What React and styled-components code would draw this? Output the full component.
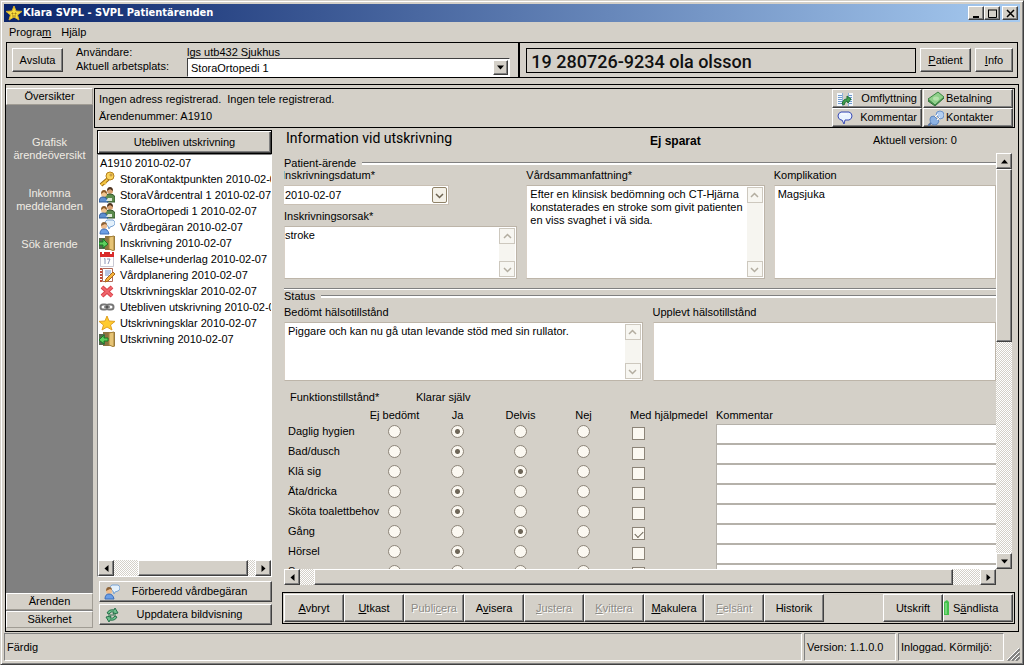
import { createGlobalStyle, styled } from 'styled-components';

const messageIcon = (
  <>
    <path d="M8 1h6q2 1 2 3t-2 3l-3 1-1 2-1-3Q6 6 6 4t2-3z" fill="#e4f1fb" stroke="#7aa4d4" />
    <circle cx="5" cy="7" r="3" fill="#efbd8d" />
    <path d="M2 7q0-4 3-4 3 0 3 3L6 5z" fill="#8d6236" />
    <path d="M1 15q0-5 4-5t5 5z" fill="#6c9fe6" stroke="#3d6db8" />
  </>
);

const peopleIcon = (
  <>
    <circle cx="11" cy="4" r="3" fill="#d9a173" />
    <path d="M8 4q0-4 3-4t3 4l-3-2z" fill="#4e3420" />
    <path d="M6 12V9q1-2 5-2t5 3v5H8z" fill="#5b8b4d" stroke="#34562c" />
    <circle cx="5" cy="7" r="3" fill="#f0c48e" />
    <path d="M2 7q0-4 3-4t3 4L5 5z" fill="#8a5a26" />
    <path d="M0 15q0-5 4-5t5 5z" fill="#5d8fd0" stroke="#315a96" />
    <path d="M9 11h4v3H7z" fill="#dfe8d8" />
  </>
);

const icons = {
  appStar: (
    <>
      <path d="M8 1l2 5 6 .4-4.500 3.600L13 15l-5-3-5 3 1.500-5L0 6.400 6 6z" fill="#f7dc3c" stroke="#d9b02c" />
      <path d="M6 8h1v1H6zM9 8h1v1H9zM6 11h4" fill="#6a5010" stroke="#a8821c" />
    </>
  ),
  key: (
    <>
      <path d="M9 8l-7 6" stroke="#9a6a10" strokeWidth="4" />
      <path d="M9 8l-7 6M5 11l2 2" stroke="#f4c542" strokeWidth="2" />
      <circle cx="11" cy="5" r="4" fill="#f9d35c" stroke="#b57f1a" />
      <circle cx="12" cy="4" r="1" fill="#fff" stroke="#b57f1a" />
    </>
  ),
  people: peopleIcon,
  message: messageIcon,
  enter: (
    <>
      <path d="M6 1h10v14H6z" fill="#8d7440" />
      <path d="M10 2l5-1v15l-5-2z" fill="#e6c476" stroke="#a5813a" />
      <path d="M0 3h6v11H0z" fill="#55694d" />
      <path d="M0 7h4V4l5 5-5 4v-3H0z" fill="#5ed05e" stroke="#187a24" />
    </>
  ),
  leave: (
    <>
      <path d="M4 1h12v14H4z" fill="#8d7440" />
      <path d="M10 2l5-1v15l-5-2z" fill="#e6c476" stroke="#a5813a" />
      <path d="M0 3h6v11H0z" fill="#55694d" />
      <path d="M9 7H5V4L0 9l5 4v-3h4z" fill="#5ed05e" stroke="#187a24" />
    </>
  ),
  calendar: (
    <>
      <path d="M1.500 2.500h13v13h-13z" fill="#fff" stroke="#c9c9d4" />
      <path d="M1 1h14v5H1z" fill="#d92b2b" />
      <path d="M4 0v3M12 0v3" stroke="#fff" strokeWidth="2" />
      <path d="M5 8l1-.5V13M8 8h3l-2 5" fill="none" stroke="#8d96b8" />
    </>
  ),
  notepad: (
    <>
      <path d="M3.500 1.500h10v13h-10z" fill="#fff" stroke="#b06a5a" />
      <path d="M2 1v14" stroke="#c24b3a" strokeWidth="2" strokeDasharray="2 1" />
      <path d="M6 4h6M6 6h6M6 8h4" stroke="#6f93cc" />
      <path d="M14 5l2 2-7 7-3 1 1-3z" fill="#f6b53d" stroke="#a8681c" />
    </>
  ),
  cross: (
    <>
      <path d="M3 4l10 9M13 4L3 13" stroke="#d8444c" strokeWidth="4" />
      <path d="M3 4l10 9M13 4L3 13" stroke="#f0666c" strokeWidth="2" />
    </>
  ),
  chain: (
    <g fill="none" stroke="#777">
      <rect x="1.500" y="5.500" width="7" height="5" rx="2.500" strokeWidth="2" />
      <rect x="7.500" y="5.500" width="7" height="5" rx="2.500" strokeWidth="2" />
      <path d="M5 8h6" stroke="#333" />
    </g>
  ),
  star: <path d="M8 1l2 5 6 .4-4.500 3.600L13 15l-5-3-5 3 1.500-5L0 6.400 6 6z" fill="#ffcb2e" stroke="#e0a020" />,
  move: (
    <>
      <path d="M0 2h6v13H0zM11 2h5v13h-5z" fill="#f4f8fd" />
      <path
        d="M1 4.500h4M1 6.500h4M1 8.500h4M1 10.500h4M1 12.500h4M12 4.500h3M12 6.500h3M12 8.500h3M12 10.500h3M12 12.500h3"
        stroke="#6f9bd0"
      />
      <path d="M5.500 2v13M11.500 2v13" stroke="#8fb2da" />
      <path d="M5 13q1-5 5-5V5l4 3-3 4-1-2q-2 0-3 4z" fill="#3da04c" stroke="#1f6d33" />
    </>
  ),
  bubble: (
    <>
      <path d="M4 2h8q3 1 3 4t-3 4H8l-1 4-2-4H4Q1 9 1 6t3-4z" fill="#eaf3ff" stroke="#3648b4" />
      <path d="M4 4h6" stroke="#fff" />
    </>
  ),
  money: (
    <>
      <path d="M0 10l10-8 6 5-9 8z" fill="#4f9a52" stroke="#2f7036" />
      <path d="M0 8l10-7 6 5-9 8z" fill="#8fd08a" stroke="#3d8444" />
      <ellipse cx="8" cy="7.500" rx="3" ry="2" fill="#b5e2ac" />
    </>
  ),
  plug: (
    <>
      <path d="M0 16l5-5" stroke="#5a78a8" strokeWidth="2" />
      <path d="M2 9q0-3 4-3l5 5q-1 4-4 4-5 0-5-6z" fill="#8db2e2" stroke="#5f88c0" />
      <path d="M8 5q0-4 4-4 4 0 4 4 0 4-4 4z" fill="#b4cef0" stroke="#6f94c8" />
      <path d="M7 7l3-3M9 10l3-3" stroke="#fff" />
    </>
  ),
  refresh: (
    <>
      <path d="M3 6q2-4 7-3l1-2 3 5-5 1 1-2Q7 4 5 7z" fill="#6cc08c" stroke="#28704a" />
      <path d="M13 10q-2 4-7 3l-1 2-3-5 5-1-1 2q3 1 5-2z" fill="#6cc08c" stroke="#28704a" />
      <path d="M4 8h8" stroke="#28704a" />
    </>
  ),
};

const treeItems = [
  ['key', 'StoraKontaktpunkten 2010-02-07'],
  ['people', 'StoraVårdcentral 1 2010-02-07'],
  ['people', 'StoraOrtopedi 1 2010-02-07'],
  ['message', 'Vårdbegäran 2010-02-07'],
  ['enter', 'Inskrivning 2010-02-07'],
  ['calendar', 'Kallelse+underlag 2010-02-07'],
  ['notepad', 'Vårdplanering 2010-02-07'],
  ['cross', 'Utskrivningsklar 2010-02-07'],
  ['chain', 'Utebliven utskrivning 2010-02-07'],
  ['star', 'Utskrivningsklar 2010-02-07'],
  ['leave', 'Utskrivning 2010-02-07'],
];

const levels = ['Ej bedömt', 'Ja', 'Delvis', 'Nej'];

const abilities = [
  { name: 'Daglig hygien', level: 'Ja' },
  { name: 'Bad/dusch', level: 'Ja' },
  { name: 'Klä sig', level: 'Delvis' },
  { name: 'Äta/dricka', level: 'Ja' },
  { name: 'Sköta toalettbehov', level: 'Ja' },
  { name: 'Gång', level: 'Delvis', aid: true },
  { name: 'Hörsel', level: 'Ja' },
  { name: 'Syn' },
];

const actions = [
  { before: '', hot: 'A', after: 'vbryt' },
  { before: '', hot: 'U', after: 'tkast' },
  { before: 'Publi', hot: 'c', after: 'era', disabled: true },
  { before: 'A', hot: 'v', after: 'isera' },
  { before: '', hot: 'J', after: 'ustera', disabled: true },
  { before: '', hot: 'K', after: 'vittera', disabled: true },
  { before: '', hot: 'M', after: 'akulera' },
  { before: '', hot: 'F', after: 'elsänt', disabled: true },
  { before: 'Historik', hot: '', after: '' },
];

const Icon = ({ name }) => (
  <IconSvg viewBox="0 0 16 16" aria-hidden="true">
    {icons[name]}
  </IconSvg>
);

const Arrow = ({ dir }) => {
  const turn = { up: 0, right: 90, down: 180, left: 270 }[dir];
  return (
    <ArrowSvg viewBox="0 0 7 7" aria-hidden="true">
      <path d="M0 5.500h7L3.500 1.500z" transform={`rotate(${turn} 3.500 3.500)`} />
    </ArrowSvg>
  );
};

const Chevron = ({ up }) => (
  <ChevronSvg viewBox="0 0 9 9" aria-hidden="true">
    <path d={up ? 'M1 6l3.500-3.500L8 6' : 'M1 3l3.500 3.500L8 3'} />
  </ChevronSvg>
);

const Scrollbar = ({ vertical, start, size, label }) => (
  <ScrollTrack $vertical={vertical}>
    <ScrollButton aria-label={`${label} bakåt`}>
      <Arrow dir={vertical ? 'up' : 'left'} />
    </ScrollButton>
    <ScrollLane $vertical={vertical}>
      <ScrollThumb $vertical={vertical} $start={start} $size={size} />
    </ScrollLane>
    <ScrollButton aria-label={`${label} framåt`}>
      <Arrow dir={vertical ? 'down' : 'right'} />
    </ScrollButton>
  </ScrollTrack>
);

const NoteField = ({ id, label, value, scroll, flush }) => (
  <Field>
    <FieldLabel htmlFor={id}>{label}</FieldLabel>
    <NoteBox>
      <NoteText id={id} defaultValue={value} $flush={flush} />
      {scroll && (
        <NoteScroll>
          <SoftButton aria-label="Upp" disabled>
            <Chevron up />
          </SoftButton>
          <SoftButton aria-label="Ned" disabled>
            <Chevron />
          </SoftButton>
        </NoteScroll>
      )}
    </NoteBox>
  </Field>
);

const App = () => {
  return (
    <Window>
      <GlobalStyle />
      <TitleBar>
        <Icon name="appStar" />
        <Title>Klara SVPL - SVPL Patientärenden</Title>
        <WindowButton aria-label="Minimera">
          <svg viewBox="0 0 9 9">
            <path d="M1 8h6" strokeWidth="2" />
          </svg>
        </WindowButton>
        <WindowButton aria-label="Maximera">
          <svg viewBox="0 0 9 9">
            <path d="M.5 1v7.500h8V1M0 1h9" />
          </svg>
        </WindowButton>
        <WindowButton aria-label="Stäng" $apart>
          <svg viewBox="0 0 9 9">
            <path d="M1 1l7 7M8 1L1 8" strokeWidth="1.500" />
          </svg>
        </WindowButton>
      </TitleBar>

      <MenuBar>
        <MenuItem>
          Progra<u>m</u>
        </MenuItem>
        <MenuItem>Hjälp</MenuItem>
      </MenuBar>

      <TopBar>
        <UserPart>
          <Button>Avsluta</Button>
          <UserGrid>
            <span>Användare:</span>
            <span>lgs utb432 Sjukhus</span>
            <label htmlFor="workplace">Aktuell arbetsplats:</label>
            <SelectBox>
              <WorkplaceSelect id="workplace">
                <option>StoraOrtopedi 1</option>
              </WorkplaceSelect>
              <SelectArrow>
                <Arrow dir="down" />
              </SelectArrow>
            </SelectBox>
          </UserGrid>
        </UserPart>
        <PatientPart>
          <PatientName>19 280726-9234 ola olsson</PatientName>
          <Button>
            <u>P</u>atient
          </Button>
          <Button $narrow>
            <u>I</u>nfo
          </Button>
        </PatientPart>
      </TopBar>

      <Frame>
        <Sidebar>
          <SideTab>Översikter</SideTab>
          <SideLinks>
            <a href="#oversikt">Grafisk ärendeöversikt</a>
            <a href="#inkomna">Inkomna meddelanden</a>
            <a href="#sok">Sök ärende</a>
          </SideLinks>
          <SideTab>Ärenden</SideTab>
          <SideTab>Säkerhet</SideTab>
        </Sidebar>

        <Main>
          <PatientBand>
            <BandText>
              <BandLine>
                <span>Ingen adress registrerad.</span>
                <span>Ingen tele registrerad.</span>
              </BandLine>
              <BandLine>Ärendenummer: A1910</BandLine>
            </BandText>
            <BandButtons>
              <BandButton $spread>
                <Icon name="move" />
                Omflyttning
              </BandButton>
              <BandButton>
                <Icon name="money" />
                Betalning
              </BandButton>
              <BandButton $spread>
                <Icon name="bubble" />
                Kommentar
              </BandButton>
              <BandButton>
                <Icon name="plug" />
                Kontakter
              </BandButton>
            </BandButtons>
          </PatientBand>

          <Body>
            <TreePanel>
              <TreeHeader>Utebliven utskrivning</TreeHeader>
              <TreeBox>
                <TreeList>
                  <TreeRoot>A1910 2010-02-07</TreeRoot>
                  {treeItems.map(([icon, text], index) => (
                    <TreeItem key={index}>
                      <Icon name={icon} />
                      {text}
                    </TreeItem>
                  ))}
                </TreeList>
                <Scrollbar start={17} size={78} label="Lista" />
              </TreeBox>
              <TreeButton>
                <Icon name="message" />
                <span>Förberedd vårdbegäran</span>
              </TreeButton>
              <TreeButton>
                <Icon name="refresh" />
                <span>Uppdatera bildvisning</span>
              </TreeButton>
            </TreePanel>

            <FormPanel>
              <FormHeader>
                <Heading>Information vid utskrivning</Heading>
                <SaveState>Ej sparat</SaveState>
                <span>Aktuell version: 0</span>
              </FormHeader>

              <FormScroller>
                <FormView>
                  <Legend>Patient-ärende</Legend>
                  <PatientGroup>
                    <AdmissionColumn>
                      <Field>
                        <FieldLabel htmlFor="admitted" $clip>
                          Inskrivningsdatum*
                        </FieldLabel>
                        <DateBox>
                          <DateSelect id="admitted">
                            <option>2010-02-07</option>
                          </DateSelect>
                          <DateArrow>
                            <Chevron />
                          </DateArrow>
                        </DateBox>
                      </Field>
                      <NoteField id="reason" label="Inskrivningsorsak*" value="stroke" scroll flush />
                    </AdmissionColumn>
                    <NoteField
                      id="summary"
                      label="Vårdsammanfattning*"
                      value={
                        'Efter en klinsisk bedömning och CT-Hjärna\nkonstaterades en stroke som givit patienten\nen viss svaghet i vä sida.'
                      }
                      scroll
                    />
                    <NoteField id="complication" label="Komplikation" value="Magsjuka" />
                  </PatientGroup>
                  <Groove />

                  <Legend>Status</Legend>
                  <StatusGroup>
                    <NoteField
                      id="assessed"
                      label="Bedömt hälsotillstånd"
                      value="Piggare och kan nu gå utan levande stöd med sin rullator."
                      scroll
                    />
                    <NoteField id="perceived" label="Upplevt hälsotillstånd" value="" />
                  </StatusGroup>

                  <AbilityTable>
                    <colgroup>
                      <col className="name" />
                      <col className="level" />
                      <col className="level" />
                      <col className="level" />
                      <col className="level" />
                      <col className="aid" />
                      <col />
                    </colgroup>
                    <thead>
                      <tr>
                        <th colSpan={7}>
                          <TableTitle>
                            <span>Funktionstillstånd*</span>
                            <span>Klarar själv</span>
                          </TableTitle>
                        </th>
                      </tr>
                      <tr>
                        <th aria-label="Funktion" />
                        {levels.map((level) => (
                          <LevelHead key={level}>{level}</LevelHead>
                        ))}
                        <AidHead>Med hjälpmedel</AidHead>
                        <th>Kommentar</th>
                      </tr>
                    </thead>
                    <tbody>
                      {abilities.map(({ name, level: chosen, aid }) => (
                        <tr key={name}>
                          <AbilityName scope="row">{name}</AbilityName>
                          {levels.map((level) => (
                            <LevelCell key={level}>
                              <Radio
                                type="radio"
                                name={name}
                                aria-label={`${name}: ${level}`}
                                defaultChecked={level === chosen}
                              />
                            </LevelCell>
                          ))}
                          <AidCell>
                            <Checkbox type="checkbox" aria-label={`${name}: Med hjälpmedel`} defaultChecked={aid} />
                          </AidCell>
                          <td>
                            <CommentInput type="text" aria-label={`${name}: Kommentar`} />
                          </td>
                        </tr>
                      ))}
                    </tbody>
                  </AbilityTable>
                </FormView>
                <Scrollbar vertical start={0} size={45} label="Formulär lodrätt" />
                <Scrollbar start={2} size={94} label="Formulär vågrätt" />
              </FormScroller>

              <ActionBar>
                {actions.map(({ before, hot, after, disabled }) => (
                  <ActionButton key={before + hot + after} disabled={disabled}>
                    {before}
                    <u>{hot}</u>
                    {after}
                  </ActionButton>
                ))}
                <ActionButton $pushed>Utskrift</ActionButton>
                <ActionButton $wide>
                  <SendMark viewBox="0 0 5 16" aria-hidden="true">
                    <path d="M0 2l3-2 2 2v13H0z" fill="#43c04b" />
                    <path d="M2 3v11" stroke="#a7ecaa" />
                  </SendMark>
                  <span>
                    S<u>ä</u>ndlista
                  </span>
                </ActionButton>
              </ActionBar>
            </FormPanel>
          </Body>
        </Main>
      </Frame>

      <StatusBar>
        <StatusCell $grow>Färdig</StatusCell>
        <StatusCell $width="92px">Version: 1.1.0.0</StatusCell>
        <StatusCell $width="106px">Inloggad. Körmiljö:</StatusCell>
        <Grip viewBox="0 0 13 13" aria-hidden="true">
          <path d="M1 13L13 1M5 13l8-8M9 13l4-4" stroke="#808080" strokeWidth="2" />
          <path d="M0 12L12 0M4 12l8-8M8 12l4-4" stroke="#fff" />
        </Grip>
      </StatusBar>
    </Window>
  );
};

const GlobalStyle = createGlobalStyle`
  * {
    box-sizing: border-box;
  }
  body {
    margin: 0;
    background: #d4d0c8;
    color: #000;
    font: 11px/13px 'Liberation Sans', Arial, sans-serif;
  }
  button, input, select, textarea {
    margin: 0;
    font: inherit;
    color: inherit;
    border-radius: 0;
  }
`;

const raised = `
  border: 1px solid;
  border-color: #fff #404040 #404040 #fff;
  box-shadow: inset -1px -1px 0 #808080;
  background: #d4d0c8;
`;

const dither = `
  background: repeating-conic-gradient(#fff 0 25%, #d4d0c8 0 50%) 0 0 / 2px 2px;
`;

const Window = styled.div`
  display: flex;
  flex-direction: column;
  height: 100vh;
  padding: 3px;
  border: 1px solid;
  border-color: #d4d0c8 #404040 #404040 #d4d0c8;
  box-shadow: inset 1px 1px 0 #fff, inset -1px -1px 0 #808080;
`;

const IconSvg = styled.svg`
  flex: none;
  width: 16px;
  height: 16px;
  fill: none;
`;

const ArrowSvg = styled.svg`
  display: block;
  width: 7px;
  height: 7px;
`;

const ChevronSvg = styled.svg`
  display: block;
  width: 9px;
  height: 9px;
  fill: none;
  stroke: currentColor;
  stroke-width: 1.5;
`;

const TitleBar = styled.header`
  display: flex;
  flex: none;
  align-items: center;
  height: 18px;
  padding: 0 2px;
  background: linear-gradient(to right, #0a246a, #a6caf0);
`;

const Title = styled.h1`
  flex: 1;
  margin: 0 0 0 1px;
  color: #fff;
  font: bold 11px/18px 'DejaVu Sans Condensed', Tahoma, sans-serif;
`;

const WindowButton = styled.button`
  ${raised}
  display: flex;
  align-items: center;
  justify-content: center;
  width: 16px;
  height: 14px;
  margin-left: ${({ $apart }) => ($apart ? '2px' : '0')};
  padding: 0;

  svg {
    width: 9px;
    height: 9px;
    fill: none;
    stroke: #000;
  }
`;

const MenuBar = styled.nav`
  display: flex;
  flex: none;
  height: 20px;
  padding-left: 5px;
  gap: 10px;
`;

const MenuItem = styled.button`
  padding: 0;
  border: 0;
  background: none;
`;

const TopBar = styled.section`
  display: flex;
  flex: none;
  height: 36px;
  margin: 0 2px 6px;
  border: 1px solid #000;
`;

const UserPart = styled.div`
  display: flex;
  flex: 511 1 0;
  align-items: center;
  gap: 13px;
  padding: 0 8px 0 5px;
  border-right: 2px solid #000;
`;

const PatientPart = styled.div`
  display: flex;
  flex: 499 1 0;
  align-items: center;
  gap: 4px;
  padding: 0 4px 0 6px;
`;

const Button = styled.button`
  ${raised}
  flex: none;
  width: ${({ $narrow }) => ($narrow ? '38px' : '51px')};
  height: 24px;
  padding: 0;
`;

const UserGrid = styled.div`
  display: grid;
  flex: 1;
  grid-template-columns: 111px 1fr;
  grid-template-rows: 14px 19px;
  line-height: 16px;
`;

const SelectBox = styled.div`
  display: flex;
  padding: 1px;
  border: 1px solid;
  border-color: #404040 #fff #fff #404040;
  background: #fff;
`;

const WorkplaceSelect = styled.select`
  flex: 1;
  min-width: 0;
  padding: 0 2px;
  border: 0;
  appearance: none;
  background: #fff;
`;

const SelectArrow = styled.span`
  ${raised}
  display: grid;
  place-items: center;
  width: 15px;
  pointer-events: none;
`;

const PatientName = styled.div`
  flex: 1;
  height: 25px;
  padding: 1px 0 0 4px;
  border: 1px solid #000;
  font: 500 18px/24px Roboto, sans-serif;
  color: #111;
`;

const Frame = styled.div`
  display: flex;
  flex: 1;
  min-height: 0;
  gap: 1px;
  margin: 0 1px;
  padding: 3px 3px 3px 0;
  border: 1px solid #000;
`;

const Sidebar = styled.aside`
  display: flex;
  flex: none;
  flex-direction: column;
  gap: 1px;
  width: 87px;
  background: #808080;
`;

const SideTab = styled.button`
  height: 17px;
  padding: 0;
  border: 1px solid;
  border-color: #fff #a09c94 #a09c94 #fff;
  background: #d4d0c8;
`;

const SideLinks = styled.nav`
  display: flex;
  flex: 1;
  flex-direction: column;
  gap: 25px;
  padding-top: 30px;
  text-align: center;

  a {
    color: #f0ece4;
    text-decoration: none;
  }
`;

const Main = styled.main`
  display: flex;
  flex: 1;
  flex-direction: column;
  min-width: 0;
`;

const PatientBand = styled.section`
  display: flex;
  flex: none;
  justify-content: space-between;
  height: 40px;
  padding-right: 1px;
  border: 1px solid #000;
`;

const BandText = styled.div`
  padding: 2px 4px;
`;

const BandLine = styled.div`
  display: flex;
  gap: 6px;
  line-height: 17px;
`;

const BandButtons = styled.div`
  display: grid;
  grid-template-columns: 90px 90px;
  grid-auto-rows: 1fr;
  gap: 0 1px;
`;

const BandButton = styled.button`
  ${raised}
  display: flex;
  align-items: center;
  justify-content: ${({ $spread }) => ($spread ? 'space-between' : 'flex-start')};
  gap: 2px;
  min-height: 0;
  padding: 0 4px;
`;

const Body = styled.div`
  display: flex;
  flex: 1;
  min-height: 0;
  gap: 10px;
  padding: 2px 0 0 3px;
`;

const TreePanel = styled.section`
  display: flex;
  flex: none;
  flex-direction: column;
  width: 175px;
  padding-bottom: 3px;
`;

const TreeHeader = styled.button`
  flex: none;
  height: 24px;
  padding: 0;
  border: 1px solid #000;
  background: #d4d0c8;
  box-shadow: inset 1px 1px 0 #fff, inset -1px -1px 0 #404040, inset -2px -2px 0 #808080;
`;

const TreeBox = styled.div`
  display: flex;
  flex: 1;
  flex-direction: column;
  min-height: 0;
  margin-bottom: 4px;
  border: 1px solid;
  border-color: #808080 #fff #fff #808080;
  background: #fff;
`;

const TreeList = styled.ul`
  flex: 1;
  margin: 0;
  padding: 0 0 0 1px;
  overflow: hidden;
  list-style: none;
  white-space: nowrap;
`;

const TreeRoot = styled.li`
  padding-left: 1px;
  line-height: 16px;
`;

const TreeItem = styled.li`
  display: flex;
  align-items: center;
  gap: 5px;
  height: 16px;
`;

const TreeButton = styled.button`
  ${raised}
  display: flex;
  flex: none;
  align-items: center;
  height: 21px;
  margin: 0 0 2px 2px;
  padding: 0 12px 0 4px;

  &:last-child {
    margin-bottom: 0;
  }

  span {
    flex: 1;
  }
`;

const ScrollTrack = styled.div`
  display: flex;
  flex: none;
  flex-direction: ${({ $vertical }) => ($vertical ? 'column' : 'row')};
  ${({ $vertical }) => ($vertical ? 'width: 16px;' : 'height: 16px;')}
`;

const ScrollButton = styled.button`
  ${raised}
  display: grid;
  flex: none;
  place-items: center;
  width: 16px;
  height: 16px;
  padding: 0;
`;

const ScrollLane = styled.div`
  ${dither}
  display: flex;
  flex: 1;
  flex-direction: ${({ $vertical }) => ($vertical ? 'column' : 'row')};
`;

const ScrollThumb = styled.div`
  ${raised}
  flex: 0 0 ${({ $size }) => $size}%;
  margin-left: ${({ $vertical, $start }) => ($vertical ? 0 : $start)}%;
`;

const FormPanel = styled.section`
  display: flex;
  flex: 1;
  flex-direction: column;
  min-width: 0;
  padding-bottom: 4px;
`;

const FormHeader = styled.div`
  display: grid;
  flex: none;
  grid-template-columns: 364fr 223fr 142fr;
  height: 23px;
  padding-left: 4px;
  line-height: 20px;
`;

const Heading = styled.h2`
  margin: 0;
  font: 14px/16px Roboto, sans-serif;
`;

const SaveState = styled.strong`
  font-size: 12px;
  line-height: 22px;
`;

const FormScroller = styled.div`
  display: grid;
  flex: 1;
  grid-template-columns: minmax(0, 1fr) 16px;
  grid-template-rows: minmax(0, 1fr) 17px;
  min-height: 0;
  margin: 0 3px 6px 2px;
`;

const FormView = styled.form`
  overflow: hidden;
  padding-top: 4px;
`;

const Legend = styled.div`
  display: flex;
  align-items: center;
  gap: 6px;
  line-height: 12px;

  &::after {
    content: '';
    flex: 1;
    height: 2px;
    border-top: 1px solid #808080;
    background: #fff;
  }
`;

const Groove = styled.hr`
  height: 2px;
  margin: 9px 0 0;
  border: 0;
  border-top: 1px solid #808080;
  background: #fff;
`;

const PatientGroup = styled.div`
  display: grid;
  grid-template-columns: 233fr 238fr 222fr;
  gap: 9px;
  height: 110px;
`;

const StatusGroup = styled.div`
  display: grid;
  grid-template-columns: 358fr 343fr;
  gap: 10px;
  height: 79px;
  padding-top: 4px;
`;

const AdmissionColumn = styled.div`
  display: grid;
  grid-template-rows: 36px 1fr;
  gap: 5px;
`;

const Field = styled.div`
  display: flex;
  flex-direction: column;
  gap: 3px;
  min-width: 0;
`;

const FieldLabel = styled.label`
  margin-left: ${({ $clip }) => ($clip ? '-2px' : '0')};
`;

const NoteBox = styled.div`
  display: flex;
  flex: 1;
  min-height: 0;
  border: 1px solid #bdb5a9;
  border-left-color: #d8d0c6;
  background: #fff;
`;

const NoteText = styled.textarea`
  flex: 1;
  min-width: 0;
  padding: ${({ $flush }) => ($flush ? '2px 0' : '2px 3px')};
  border: 0;
  outline: 0;
  resize: none;
  overflow: hidden;
  background: none;
`;

const NoteScroll = styled.div`
  display: flex;
  flex-direction: column;
  justify-content: space-between;
  margin: 1px;
  background: #f6f5f0;
`;

const SoftButton = styled.button`
  display: grid;
  place-items: center;
  width: 16px;
  height: 16px;
  padding: 0;
  border: 1px solid #cdc8be;
  background: #f7f6f1;
  color: #b3ada0;
`;

const DateBox = styled.div`
  display: flex;
  width: 165px;
  height: 20px;
  padding: 1px;
  border: 1px solid #c9c0b4;
  border-left: 0;
  background: #fff;
`;

const DateSelect = styled.select`
  flex: 1;
  padding: 0;
  border: 0;
  appearance: none;
  background: #fff;
`;

const DateArrow = styled.span`
  display: grid;
  place-items: center;
  width: 15px;
  border: 1px solid #8f8268;
  border-radius: 2px;
  background: #f4f1e8;
  color: #6d6350;
  pointer-events: none;
`;

const AbilityTable = styled.table`
  width: 100%;
  margin-top: 7px;
  border-collapse: collapse;
  table-layout: fixed;
  white-space: nowrap;

  .name {
    width: 79px;
  }
  .level {
    width: 63px;
  }
  .aid {
    width: 101px;
  }
  th {
    padding: 0;
    font-weight: normal;
    text-align: left;
  }
  td {
    height: 20px;
    padding: 0;
  }
  thead tr {
    height: 18px;
  }
`;

const TableTitle = styled.div`
  display: grid;
  grid-template-columns: 126px 1fr;
  padding-left: 6px;
`;

const LevelHead = styled.th`
  && {
    text-align: center;
  }
`;

const AidHead = styled.th`
  && {
    padding-left: 15px;
  }
`;

const AbilityName = styled.th`
  && {
    padding: 0 0 6px 4px;
  }
`;

const LevelCell = styled.td`
  text-align: center;
`;

const AidCell = styled.td`
  && {
    padding-left: 17px;
  }
`;

const Radio = styled.input`
  display: block;
  width: 13px;
  height: 13px;
  margin: 0 auto 6px;
  appearance: none;
  border: 1px solid #8c8478;
  border-radius: 50%;
  background: #fbf8f1;

  &:checked {
    background: radial-gradient(circle, #6e6658 0 2px, #fbf8f1 3px);
  }
`;

const Checkbox = styled.input`
  display: grid;
  place-items: center;
  width: 13px;
  height: 13px;
  margin-bottom: 2px;
  appearance: none;
  border: 1px solid #8c8478;
  background: #fbf8f1;
  vertical-align: middle;

  &:checked::before {
    content: '';
    width: 7px;
    height: 4px;
    border: solid #6e6658;
    border-width: 0 0 1px 1px;
    transform: rotate(-45deg);
  }
`;

const CommentInput = styled.input`
  display: block;
  width: 100%;
  height: 20px;
  padding: 0 3px;
  border: 1px solid #b5b1aa;
  border-right: 0;
  outline: 0;
  background: #fff;
`;

const ActionBar = styled.div`
  display: flex;
  flex: none;
  height: 32px;
  padding: 1px;
  border: 1px solid #000;
`;

const ActionButton = styled.button`
  ${raised}
  display: flex;
  align-items: center;
  justify-content: ${({ $wide }) => ($wide ? 'flex-start' : 'center')};
  gap: 4px;
  width: ${({ $wide }) => ($wide ? '70px' : '60px')};
  margin-left: ${({ $pushed }) => ($pushed ? 'auto' : '0')};
  padding: 0;
  white-space: pre;

  &:not(:has(svg)) {
    gap: 0;
  }
  &:disabled {
    color: #8c8a85;
    text-shadow: 1px 1px 0 #fff;
  }
`;

const SendMark = styled.svg`
  width: 5px;
  height: 16px;
`;

const StatusBar = styled.footer`
  display: flex;
  flex: none;
  gap: 2px;
  height: 28px;
  margin-top: 1px;
`;

const StatusCell = styled.div`
  flex: ${({ $grow, $width }) => ($grow ? '1' : `0 0 ${$width}`)};
  padding-left: 2px;
  border: 1px solid;
  border-color: #808080 #fff #fff #808080;
  line-height: 26px;
  white-space: nowrap;
`;

const Grip = styled.svg`
  flex: none;
  align-self: flex-end;
  width: 13px;
  height: 13px;
  margin-left: 1px;
`;

export default App;
